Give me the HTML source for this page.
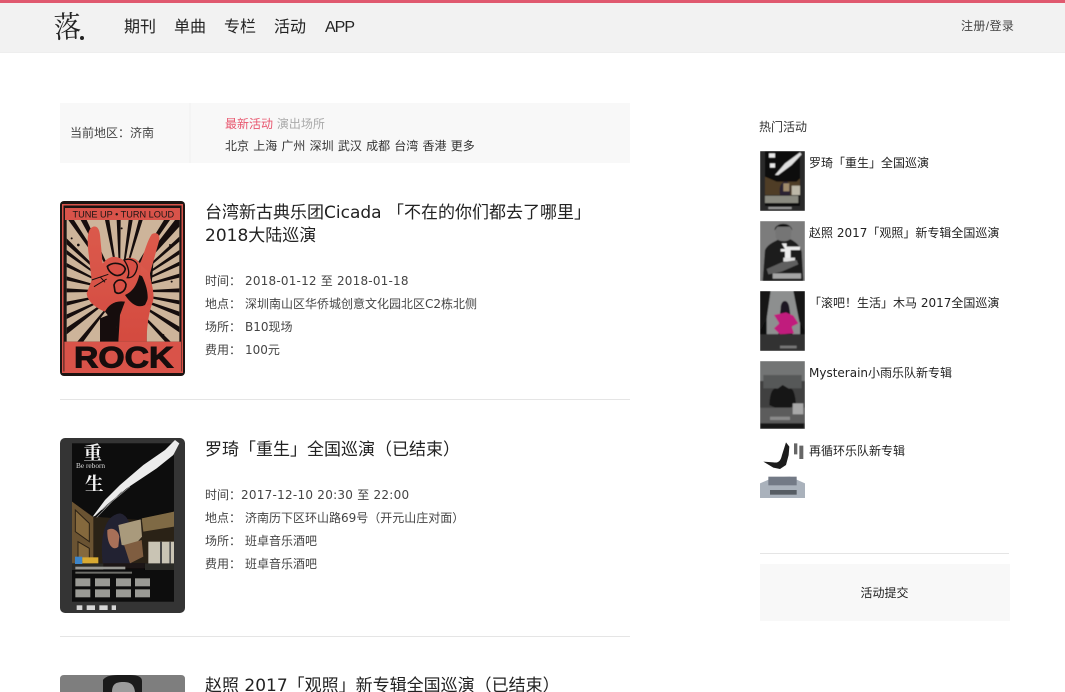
<!DOCTYPE html>
<html lang="zh"><head><meta charset="utf-8"><title>活动</title>
<style>
*{margin:0;padding:0;box-sizing:border-box}
html,body{width:1065px;height:692px;overflow:hidden;background:#fff}
body{position:relative;font-family:"DejaVu Sans","Noto Sans CJK SC",sans-serif;font-size:12px;color:#333}
.a{position:absolute;white-space:nowrap}
.n{font-size:16px;color:#222;top:17px;line-height:22px;font-family:"Liberation Sans","Noto Sans CJK SC",sans-serif}
.t{font-size:17px;color:#222;line-height:24px;left:205px}
.m{left:205px;line-height:20px;color:#444}
.m b{font-weight:400;position:absolute;left:40px}
.s{left:809px;color:#222;line-height:18px}
svg{position:absolute;display:block}
</style></head><body>
<svg width="0" height="0" style="left:0;top:0"><defs>
<filter id="b1" x="0" y="0" width="1" height="1"><feGaussianBlur stdDeviation=".35"/></filter>
<filter id="b2" x="0" y="0" width="1" height="1"><feGaussianBlur stdDeviation=".6"/></filter>
<linearGradient id="hand" x1="0" y1="0" x2="0" y2="1"><stop offset="0" stop-color="#db5a4c"/><stop offset="1" stop-color="#d44b40"/></linearGradient>
</defs></svg>
<div class="a" style="left:0;top:0;width:1065px;height:53px;background:#f2f2f2;border-top:3px solid #e0596f;border-bottom:1px solid #eee"></div>
<div class="a" style="left:53px;top:6px;font-family:'Noto Serif CJK SC',serif;font-size:30px;line-height:38px;color:#222;font-weight:400;transform:rotate(-3deg) scaleX(.9);transform-origin:left top">落</div>
<div class="a" style="left:80px;top:36px;width:4px;height:4px;border-radius:2px;background:#222"></div>
<div class="a n" style="left:124px">期刊</div><div class="a n" style="left:174px">单曲</div><div class="a n" style="left:224px">专栏</div><div class="a n" style="left:274px">活动</div><div class="a n" style="left:325px;letter-spacing:-1px">APP</div>
<div class="a" style="left:961px;top:17px;line-height:18px;color:#444;letter-spacing:.4px;font-family:'Liberation Sans','Noto Sans CJK SC',sans-serif">注册/登录</div>

<div class="a" style="left:60px;top:103px;width:570px;height:60px;background:#f8f8f8"></div>
<div class="a" style="left:189px;top:103px;width:2px;height:60px;background:#f4f4f4"></div>
<div class="a" style="left:70px;top:124px;line-height:18px;color:#444">当前地区&#xFF1A;济南</div>
<div class="a" style="left:225px;top:115px;line-height:18px"><span style="color:#e8566e">最新活动</span> <span style="color:#aaa">演出场所</span></div>
<div class="a" style="left:225px;top:137px;line-height:18px;color:#333;word-spacing:.4px">北京 上海 广州 深圳 武汉 成都 台湾 香港 更多</div>

<svg style="left:60px;top:201px" width="125" height="175" viewBox="0 0 125 175">
<rect width="125" height="175" rx="4" fill="#1b1412"/><rect x="2" y="3" width="121" height="169" fill="#d9534a"/><rect x="3.5" y="4.5" width="118" height="166" fill="#1b1412"/><rect x="5" y="7" width="115" height="12" fill="#d9534a"/>
<g filter="url(#b1)"><g transform="translate(-10,-6) scale(.33333)">
<rect x="50" y="75" width="338" height="365" fill="#cdb49a"/>
<g fill="#17110f"><path d="M55 75H72L210 290ZM92 75H110L210 290ZM165 75H178L210 290ZM200 75H212L210 290ZM236 75H248L210 290ZM266 75H278L210 290ZM342 75H360L210 290ZM375 75H388V95L210 290ZM50 130V148L210 290ZM50 165V178L210 290ZM50 204V216L210 290ZM50 244V256L210 290ZM50 280V292L210 290ZM50 320V332L210 290ZM50 358V372L210 290ZM50 398V418L210 290ZM82 440H100L210 290ZM150 440H165L210 290ZM388 125V140L210 290ZM388 165V178L210 290ZM388 200V212L210 290ZM388 236V248L210 290ZM388 280V292L210 290ZM388 316V328L210 290ZM388 350V364L210 290ZM388 395V412L210 290ZM345 440H362L210 290Z"/></g>
<path d="M150 440V370L200 350L290 400V440Z" fill="#17110f"/>
<path d="M245 205L310 205L300 330L200 350Z" fill="#17110f"/>
<path d="M130 95C115 100 110 120 115 170L125 255L110 295C112 320 140 340 165 350L200 390L205 440H290C290 400 295 360 305 330C320 300 300 260 300 235L328 135C330 115 318 110 305 118C290 140 278 190 270 205C255 185 235 185 220 195C205 185 185 180 168 195L158 205L150 120C148 100 140 92 130 95Z" fill="url(#hand)"/>
<path d="M165 350C175 330 195 315 225 320L210 360L205 440H200V395Z" fill="#17110f"/>
<path d="M225 300C250 290 262 265 268 240L290 250C300 270 302 300 285 330C265 340 245 330 225 300Z" fill="#17110f"/>
<path d="M272 210L300 235C300 260 315 290 305 325L290 335C300 295 285 260 272 235Z" fill="url(#hand)"/>
<path d="M172 214C190 198 222 205 226 222C222 240 202 246 190 238C180 232 174 226 172 214Z" fill="#d85044" stroke="#17110f" stroke-width="5"/>
<path d="M222 195C240 188 262 198 262 215C258 240 245 250 232 248C240 236 236 215 222 195Z" fill="#d85044" stroke="#17110f" stroke-width="4"/>
<path d="M192 270C198 250 222 250 228 268C228 290 205 302 195 290Z" fill="#d85044" stroke="#17110f" stroke-width="5"/>
<path d="M125 255L175 238M132 275L170 252M150 245L165 262" stroke="#17110f" stroke-width="3" fill="none"/>
<g fill="#17110f"><circle cx="65" cy="130" r="3"/><circle cx="85" cy="150" r="4"/><circle cx="215" cy="100" r="3"/><circle cx="360" cy="150" r="3"/><circle cx="75" cy="225" r="2.5"/><circle cx="365" cy="260" r="3"/><circle cx="340" cy="420" r="3"/><circle cx="80" cy="385" r="2.5"/></g>
<text x="220" y="68" text-anchor="middle" font-family="Liberation Sans,sans-serif" font-size="27" fill="#1d1513" textLength="305" lengthAdjust="spacingAndGlyphs">TUNE UP • TURN LOUD</text>
<rect x="43" y="440" width="350" height="90" fill="#d9534a"/>
<text x="221" y="518" text-anchor="middle" font-family="Liberation Sans,sans-serif" font-weight="700" font-size="90" stroke="#140f0d" stroke-width="3" fill="#140f0d" textLength="298" lengthAdjust="spacingAndGlyphs">ROCK</text>
</g></g>
</svg>

<div class="a t" style="top:201px">台湾新古典乐团Cicada 「不在的你们都去了哪里」</div>
<div class="a t" style="top:224px">2018大陆巡演</div>
<div class="a m" style="top:271px">时间&#xFF1A;<b style="letter-spacing:.2px">2018-01-12 至 2018-01-18</b></div>
<div class="a m" style="top:294px">地点&#xFF1A;<b>深圳南山区华侨城创意文化园北区C2栋北侧</b></div>
<div class="a m" style="top:317px">场所&#xFF1A;<b>B10现场</b></div>
<div class="a m" style="top:340px">费用&#xFF1A;<b>100元</b></div>
<div class="a" style="left:60px;top:399px;width:570px;height:1px;background:#e5e5e5"></div>

<svg style="left:60px;top:438px" width="125" height="175" viewBox="0 0 125 175">
<rect width="125" height="175" rx="5" fill="#343434"/>
<g filter="url(#b1)"><g transform="translate(-10,-8) scale(.33333)">
<rect x="66" y="40" width="306" height="475" fill="#070707"/>
<path d="M66 215L130 260L275 270L372 245V400H66Z" fill="#2b2118"/>
<path d="M66 215L130 262V400H66Z" fill="#6a5231"/>
<path d="M76 240L118 280V335L76 305ZM84 335L118 355V395H84Z" fill="#85693c" stroke="#2b2013" stroke-width="3"/>
<path d="M275 265L372 245V290L280 305Z" fill="#7f6b44"/>
<rect x="295" y="335" width="77" height="70" fill="#c9c4b4"/><rect x="330" y="335" width="6" height="70" fill="#444"/><rect x="358" y="335" width="5" height="70" fill="#555"/>
<path d="M158 400C150 330 160 255 210 250C240 255 250 300 245 400Z" fill="#242030"/>
<path d="M172 300C185 290 205 300 208 320L205 350C190 365 170 345 172 300Z" fill="#a87058"/>
<path d="M205 285L272 268L276 320L250 350L215 345Z" fill="#a99a7c"/>
<path d="M222 345L275 330L280 380L240 400Z" fill="#7f5d41"/>
<path d="M120 400H285V415H120Z" fill="#1a1612"/>
<path d="M66 400H160V420H66ZM285 400H372V420H285Z" fill="#2c2a26"/>
<path d="M128 260L165 210L210 165L280 105L345 60L375 30L388 40L370 75L320 115L230 175L170 225L135 258Z" fill="#ececec"/>
<path d="M140 262L215 185M155 240L240 170" stroke="#999" stroke-width="2"/>
<text x="100" y="88" font-family="Noto Serif CJK SC,serif" font-size="56" font-weight="700" fill="#f4f4f4">重</text>
<text x="105" y="182" font-family="Noto Serif CJK SC,serif" font-size="56" font-weight="700" fill="#f4f4f4">生</text>
<text x="78" y="114" font-family="Liberation Serif,serif" font-size="22" fill="#ddd">Be reborn</text>
<rect x="75" y="380" width="22" height="22" fill="#3e85c8"/><rect x="97" y="382" width="48" height="18" fill="#d8aa30"/>
<g fill="#9a9a95"><rect x="76" y="445" width="45" height="24"/><rect x="135" y="445" width="45" height="24"/><rect x="198" y="445" width="45" height="24"/><rect x="255" y="445" width="45" height="24"/><rect x="76" y="478" width="45" height="24"/><rect x="135" y="478" width="45" height="24"/><rect x="198" y="478" width="45" height="24"/><rect x="255" y="478" width="45" height="24"/><rect x="76" y="410" width="150" height="8"/><rect x="76" y="425" width="170" height="6" opacity=".7"/></g>
<g fill="#d6d6d6"><rect x="80" y="526" width="17" height="14"/><rect x="110" y="526" width="25" height="14"/><rect x="148" y="526" width="25" height="14"/><rect x="185" y="526" width="13" height="14"/></g>
</g></g>
</svg>

<div class="a t" style="top:438px">罗琦「重生」全国巡演&#xFF08;已结束&#xFF09;</div>
<div class="a m" style="top:485px">时间&#xFF1A;<span style="position:absolute;left:36px;letter-spacing:.25px">2017-12-10 20:30 至 22:00</span></div>
<div class="a m" style="top:508px">地点&#xFF1A;<b>济南历下区环山路69号&#xFF08;开元山庄对面&#xFF09;</b></div>
<div class="a m" style="top:531px">场所&#xFF1A;<b>班卓音乐酒吧</b></div>
<div class="a m" style="top:554px">费用&#xFF1A;<b>班卓音乐酒吧</b></div>
<div class="a" style="left:60px;top:636px;width:570px;height:1px;background:#e5e5e5"></div>

<svg style="left:60px;top:675px" width="125" height="17" viewBox="0 0 125 17"><path d="M0 17V4Q0 0 4 0H121Q125 0 125 4V17Z" fill="#7e7e7e"/><path d="M43 17V5Q46 0 58 0H70Q82 0 82 6V17Z" fill="#1b1b1b"/><path d="M52 17C52 9 56 7 63 7C70 7 74 9 75 17Z" fill="#9c9c9c"/></svg>
<div class="a t" style="top:674px">赵照 2017「观照」新专辑全国巡演&#xFF08;已结束&#xFF09;</div>

<div class="a" style="left:759px;top:118px;line-height:18px;color:#333">热门活动</div>

<svg style="left:760px;top:151px" width="45" height="60" viewBox="0 0 45 60"><g filter="url(#b2)"><g transform="translate(-10,-6) scale(.33333)">
<rect x="30" y="18" width="135" height="180" fill="#2c2c2c"/><rect x="45" y="18" width="105" height="165" fill="#070707"/>
<path d="M45 95L80 110L140 110L150 100V150H45Z" fill="#4f3d25"/><rect x="125" y="122" width="25" height="28" fill="#bdb8a8"/>
<path d="M90 150C85 125 95 108 110 110C122 115 122 135 120 150Z" fill="#2a2230"/><rect x="100" y="115" width="18" height="24" fill="#a08a6a"/>
<path d="M75 90L105 55L150 22L155 28L125 60L85 90Z" fill="#e0e0e0"/>
<path d="M57 25H75V38H57ZM60 55H75V68H60Z" fill="#e8e8e8"/>
<rect x="45" y="152" width="100" height="22" fill="#8a8a80"/><rect x="55" y="186" width="70" height="6" fill="#999"/>
</g></g></svg>
<svg style="left:760px;top:221px" width="45" height="60" viewBox="0 0 45 60"><g filter="url(#b2)"><g transform="translate(-10,-76) scale(.33333)">
<rect x="30" y="228" width="135" height="180" fill="#7b7b7b"/>
<path d="M38 408L45 315C55 295 75 290 85 283H122C135 290 150 300 155 320L160 408Z" fill="#1c1c1c"/>
<path d="M76 252C76 236 122 232 124 254L122 280C115 292 85 292 78 278Z" fill="#757575"/><path d="M74 256C72 232 124 228 127 256L120 245H82Z" fill="#111"/>
<path d="M95 295H110V305H150V315H122V345H105V320H92V312H105Z" fill="#ececec"/>
<rect x="100" y="338" width="35" height="12" fill="#e0e0e0"/>
<path d="M50 372L95 352L140 345L145 358L95 380L55 388Z" fill="#5f5f5f"/><rect x="68" y="385" width="85" height="16" fill="#a5a5a5"/>
</g></g></svg>
<svg style="left:760px;top:291px" width="45" height="60" viewBox="0 0 45 60"><g filter="url(#b2)"><g transform="translate(-10,-146) scale(.33333)">
<rect x="30" y="438" width="135" height="180" fill="#0f0f0f"/><rect x="50" y="438" width="100" height="130" fill="#8d8f8f"/>
<path d="M30 438H62L50 520L30 560ZM165 438H130L148 530L165 560Z" fill="#171717"/>
<path d="M92 490C92 462 115 460 118 488L124 530L128 570H85L88 525Z" fill="#1e1820"/>
<path d="M72 510L108 502L130 512L145 535L125 545L132 565L90 568L72 550L88 535Z" fill="#c01a7d"/>
<rect x="30" y="568" width="135" height="50" fill="#333"/><rect x="90" y="602" width="50" height="8" fill="#777"/>
</g></g></svg>
<svg style="left:760px;top:361px" width="45" height="68" viewBox="0 0 45 68"><g filter="url(#b2)"><g transform="translate(-10,-6) scale(.33333)">
<rect x="30" y="18" width="135" height="204" fill="#3f3f3f"/><rect x="30" y="18" width="135" height="60" fill="#737575"/><rect x="40" y="60" width="115" height="40" fill="#565858"/>
<path d="M58 150C60 110 70 95 82 102L98 90L118 102C128 96 136 115 138 150L120 158H75Z" fill="#121212"/>
<rect x="30" y="158" width="135" height="47" fill="#5c5c5c"/>
<rect x="128" y="145" width="32" height="33" fill="#a8a8a8"/>
<rect x="60" y="185" width="60" height="10" fill="#8a8a8a"/>
<rect x="32" y="205" width="130" height="15" fill="#141414"/>
</g></g></svg>
<svg style="left:760px;top:441px" width="45" height="57" viewBox="0 0 45 57"><g filter="url(#b1)"><g transform="translate(-10,-86) scale(.33333)">
<rect x="30" y="258" width="135" height="175" fill="#fff"/>
<path d="M40 320L70 322C85 325 92 318 96 300L108 262L118 275L116 300L108 330L90 342L70 338Z" fill="#1a1a1a"/>
<path d="M132 265H142V298H132ZM148 272H160V312H148Z" fill="#666"/>
<path d="M30 385L70 368L120 365L165 385V430H30Z" fill="#aab2bc"/>
<rect x="55" y="365" width="85" height="26" fill="#737a86"/>
<rect x="60" y="405" width="80" height="14" fill="#565b64"/>
</g></g></svg>

<div class="a s" style="top:154px">罗琦「重生」全国巡演</div>
<div class="a s" style="top:224px">赵照 2017「观照」新专辑全国巡演</div>
<div class="a s" style="top:294px">「滚吧&#xFF01;生活」木马 2017全国巡演</div>
<div class="a s" style="top:364px">Mysterain小雨乐队新专辑</div>
<div class="a s" style="top:442px">再循环乐队新专辑</div>

<div class="a" style="left:760px;top:553px;width:249px;height:1px;background:#e5e5e5"></div>
<div class="a" style="left:760px;top:564px;width:250px;height:57px;background:#f8f8f8;text-align:center;line-height:59px;color:#222;padding-right:1px">活动提交</div>
</body></html>
